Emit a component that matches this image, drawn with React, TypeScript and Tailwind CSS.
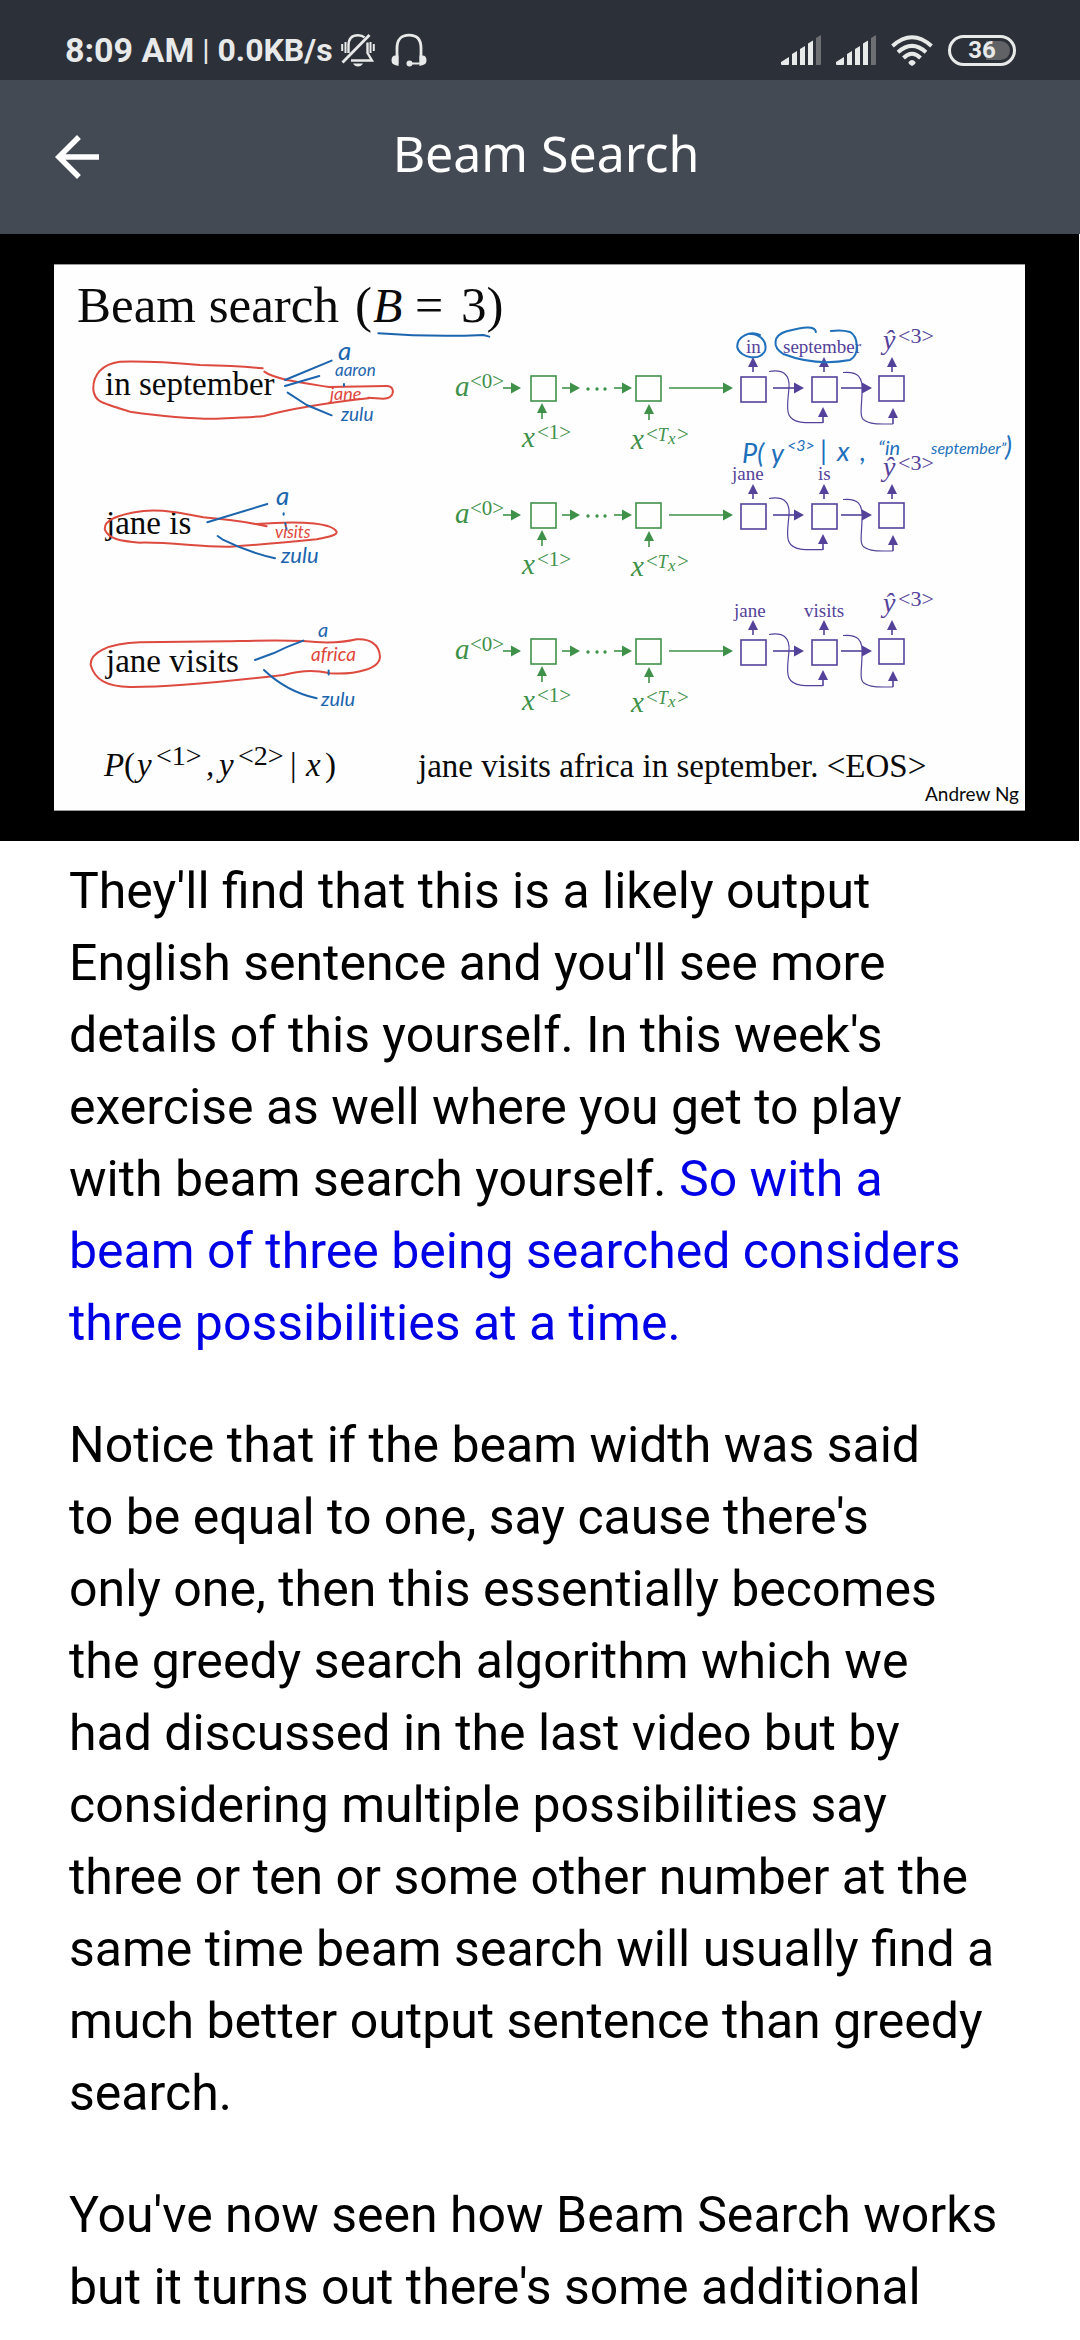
import { MdArrowBack } from "react-icons/md";

const GREEN = "#3f9149";
const PURPLE = "#54429a";
const RED = "#dd4a3f";
const BLUE = "#1c65ae";

function MutedBell() {
  return (
    <svg viewBox="0 0 34 34" className="h-[34px] w-[34px] shrink-0" fill="none" stroke="#e8e9e9" strokeWidth="2.4" aria-label="Ringer off" role="img">
      <path d="M7.500 20V12.500C7.500 5.500 11 2.200 17 2.200c3 0 5 .8 6.500 2.200M26.500 9.500v10.500l4.500 7.500H10" />
      <path d="M1.500 29.500 28.500 2" strokeWidth="2.8" />
      <path d="M1.200 11v7M4.500 9v11M29.500 9v11M32.800 11v7" strokeWidth="2" />
      <path d="M12 30.500h10c-1 2-3 3-5 3s-4-1-5-3z" fill="#e8e9e9" stroke="none" />
    </svg>
  );
}

function Headset() {
  return (
    <svg viewBox="0 0 36 34" className="h-[34px] w-9 shrink-0" fill="none" stroke="#e8e9e9" strokeWidth="2.800" aria-label="Headset" role="img">
      <path d="M6 31V15C6 6.500 10.500 2.200 18 2.200S30 6.500 30 15v16" />
      <path d="M18.500 30.500H29" strokeWidth="2" />
      <circle cx="18.500" cy="30.500" r="3" fill="#e8e9e9" stroke="none" />
      <path d="M7.500 22.500H4.500Q.5 22.500 .5 27.500Q.5 31 4 32l3.500 1zM28.500 22.500h3Q35.500 22.500 35.500 27.500Q35.500 31 32 32l-3.500 1z" fill="#e8e9e9" stroke="none" />
    </svg>
  );
}

function Signal() {
  return (
    <svg viewBox="0 0 40 30" className="h-[30px] w-10 shrink-0" fill="#e8e9e9" aria-label="Signal" role="img">
      <path d="M0 27 8 22v7q0 1-1 1H1q-1 0-1-1zM11 19l5-3v14h-5zM19 14l5-3v19h-5zM27 8.500l5-3V30h-5z" />
      <path d="M35 3l5-3v29q0 1-1 1h-4z" fill="#6d6f73" />
    </svg>
  );
}

function Wifi() {
  return (
    <svg viewBox="0 0 42 31" className="h-[31px] w-[42px] shrink-0" fill="none" stroke="#e8e9e9" strokeWidth="4" aria-label="Wi-Fi" role="img">
      <path d="M1.500 11Q21-6.500 40.500 11M7 17.200Q21 4.500 35 17.200M12.500 23Q21 14.500 29.500 23" />
      <path d="M17.500 27q3.500-4 7 0q.5 2-3.500 4q-4-2-3.500-4z" fill="#e8e9e9" stroke="none" />
    </svg>
  );
}

function Battery() {
  return (
    <div className="relative flex h-[31px] w-17 items-center justify-center rounded-full border-[3px] border-[#e8e9e9]">
      <div className="absolute right-[3px] h-[19px] w-6 rounded-r-full bg-[#606266]" />
      <span className="relative text-2xl font-bold text-[#e8e9e9]">36</span>
    </div>
  );
}

type Dir = "right" | "up";

function Arrow({ x, y, length, dir }: { x: number; y: number; length: number; dir: Dir }) {
  if (dir === "right") {
    return (
      <>
        <path d={`M${x} ${y}h${length - 8}`} strokeWidth="1.6" />
        <path d={`M${x + length} ${y}l-10 -5.500v11z`} fill="currentColor" stroke="none" />
      </>
    );
  }
  return (
    <>
      <path d={`M${x} ${y}v${8 - length}`} strokeWidth="1.6" />
      <path d={`M${x} ${y - length}l-5 10h10z`} fill="currentColor" stroke="none" />
    </>
  );
}

function Node({ x, y }: { x: number; y: number }) {
  return <rect x={x} y={y} width="25" height="25" strokeWidth="1.6" />;
}

function NetworkRow({ dy, first, second, firstX, secondX, labelY }: { dy: number; first: string; second: string; firstX: number; secondX: number; labelY: number }) {
  return (
    <g transform={`translate(0 ${dy})`} fill="none" stroke="currentColor">
      <g color={GREEN}>
        <g fill="currentColor" stroke="none" fontStyle="italic" fontSize="29">
          <text x="455" y="396">a</text>
          <text x="522" y="447">x</text>
          <text x="631" y="449">x</text>
        </g>
        <g fill="currentColor" stroke="none" fontSize="21">
          <text x="470" y="388">&lt;0&gt;</text>
          <text x="537" y="439">&lt;1&gt;</text>
          <text x="646" y="441">
            &lt;<tspan fontStyle="italic" fontSize="18">T</tspan>
            <tspan fontStyle="italic" fontSize="17" x="668" y="444">x</tspan>
            <tspan x="677" y="441">&gt;</tspan>
          </text>
        </g>
        <Arrow x={503} y={388} length={18} dir="right" />
        <Node x={531} y={376} />
        <Arrow x={562} y={388} length={18} dir="right" />
        <g fill="currentColor" stroke="none">
          <circle cx="588" cy="389" r="1.700" />
          <circle cx="597" cy="389" r="1.700" />
          <circle cx="605" cy="389" r="1.700" />
        </g>
        <Arrow x={614} y={388} length={18} dir="right" />
        <Node x={636} y={376} />
        <Arrow x={669} y={388} length={64} dir="right" />
        <Arrow x={542} y={419} length={16} dir="up" />
        <Arrow x={649} y={420} length={16} dir="up" />
      </g>
      <g color={PURPLE}>
        <g fill="currentColor" stroke="none" fontSize="19">
          <text x={firstX} y={labelY}>{first}</text>
          <text x={secondX} y={labelY}>{second}</text>
          <text x="883" y="349" fontStyle="italic" fontSize="28">ŷ</text>
          <text x="898" y="343" fontSize="22">&lt;3&gt;</text>
        </g>
        <Node x={741} y={377} />
        <Node x={812} y={377} />
        <Node x={879} y={376} />
        <Arrow x={773} y={388} length={31} dir="right" />
        <Arrow x={841} y={388} length={31} dir="right" />
        <Arrow x={753} y={372} length={15} dir="up" />
        <Arrow x={824} y={372} length={15} dir="up" />
        <Arrow x={892} y={372} length={15} dir="up" />
        <Arrow x={823} y={423} length={16} dir="up" />
        <Arrow x={893} y={424} length={16} dir="up" />
        <path strokeWidth="1.200" d="M769 371.500C784 369 790 375 789 388C788 400 786 409 789 415C793 423.500 805 423 823 422.500" />
        <path strokeWidth="1.200" d="M843 372.500C858 371 863 377 862 392C862 405 859 417 864 420C870 424.500 880 424 893 424" />
      </g>
    </g>
  );
}

function Slide() {
  return (
    <svg viewBox="0 234 1079 607" className="block w-full bg-black" fontFamily="'Liberation Serif', serif" role="img" aria-label="Beam search slide">
      <rect x="54" y="264" width="971" height="547" fill="#fefefe" />
      <g fill="#0a0a0a">
        <text y="322" fontSize="51">
          <tspan x="77">Beam search</tspan>
          <tspan x="355">(</tspan>
          <tspan x="373" fontStyle="italic" fontSize="48">B</tspan>
          <tspan x="415" fontSize="50">=</tspan>
          <tspan x="461">3)</tspan>
        </text>
        <g fontSize="33">
          <text x="105" y="395">in september</text>
          <text x="106" y="534">jane is</text>
          <text x="106" y="672">jane visits</text>
          <text x="418" y="777">jane visits africa in september. &lt;EOS&gt;</text>
          <text y="776" fontStyle="italic">
            <tspan x="104">P</tspan>
            <tspan x="124" fontStyle="normal">(</tspan>
            <tspan x="137">y</tspan>
            <tspan x="156" y="765" fontStyle="normal" fontSize="28">&lt;1&gt;</tspan>
            <tspan x="206" y="776">,</tspan>
            <tspan x="219">y</tspan>
            <tspan x="238" y="765" fontStyle="normal" fontSize="28">&lt;2&gt;</tspan>
            <tspan x="290" y="776" fontStyle="normal">|</tspan>
            <tspan x="306">x</tspan>
            <tspan x="325" fontStyle="normal">)</tspan>
          </text>
        </g>
        <text x="925" y="801" fontFamily="Lato, sans-serif" fontSize="19">Andrew Ng</text>
      </g>

      <NetworkRow dy={0} first="in" second="september" firstX={746} secondX={783} labelY={353} />
      <NetworkRow dy={127} first="jane" second="is" firstX={732} secondX={818} labelY={353} />
      <NetworkRow dy={263} first="jane" second="visits" firstX={734} secondX={804} labelY={354} />

      <g transform="translate(40 250) scale(0.3333)" fill="none" strokeLinecap="round" strokeLinejoin="round">
        <g stroke={RED} strokeWidth="6">
          <path d="M668 355C620 350 560 347 480 345C400 338 320 333 240 335C185 342 158 375 160 420C165 455 180 458 270 485C340 495 450 507 530 506C600 503 650 501 672 498C740 480 850 460 985 445" />
          <path d="M673 365C690 378 720 385 745 391C800 402 830 405 868 411L1040 408C1058 408 1060 420 1058 430C1055 442 1045 446 1030 446L985 443" />
          <path d="M680 829C640 820 560 808 490 802C430 790 370 778 310 783C220 795 190 815 195 840C205 866 240 874 300 878C400 876 480 892 570 890C640 886 760 875 830 868C870 860 892 855 890 846C880 822 800 810 650 822" />
          <path d="M790 1173C700 1170 650 1172 560 1174L300 1177C200 1180 150 1210 152 1245C165 1290 200 1310 270 1311C400 1312 600 1290 730 1275C800 1258 830 1262 870 1270C950 1275 1020 1255 1020 1220C1018 1180 985 1165 950 1168C900 1180 850 1180 790 1173" />
        </g>
        <g stroke={BLUE} strokeWidth="6">
          <path d="M1015 250Q1180 262 1330 255L1348 260" />
          <path d="M735 390 875 332M735 408 838 378M743 428 800 465 875 496" />
          <path d="M502 817 682 762M533 858 550 870Q620 905 705 925M731 790v4M736 820l4 20" />
          <path d="M645 1230 700 1210Q740 1190 790 1172M672 1260Q740 1325 830 1345M866 1262v12M912 402v5" />
        </g>
        <g stroke="#2170bb" strokeWidth="6">
          <path d="M2160 255C2130 240 2090 260 2092 292C2100 325 2165 335 2176 300C2182 270 2155 250 2130 252" />
          <path d="M2328 246C2325 225 2290 231 2240 244C2200 256 2195 290 2230 312C2290 335 2360 343 2430 330C2460 315 2455 260 2430 246C2410 240 2390 241 2373 243" />
        </g>
      </g>

      <g fontFamily="Lato, sans-serif" fontStyle="italic" fill={BLUE} fontSize="19">
        <text x="338" y="360" fontSize="26">a</text>
        <text x="335" y="376" fontSize="17">aaron</text>
        <text x="341" y="421">zulu</text>
        <text x="276" y="505" fontSize="26">a</text>
        <text x="281" y="563" fontSize="22">zulu</text>
        <text x="318" y="637" fontSize="20">a</text>
        <text x="321" y="706" fontSize="20">zulu</text>
        <g fill="#e0463b">
          <text x="330" y="400" fontSize="18">jane</text>
          <text x="275" y="538" fontSize="17">visits</text>
          <text x="311" y="661">africa</text>
        </g>
        <g fill="#2170bb" fontSize="27">
          <text x="742" y="463">P(</text>
          <text x="771" y="463">y</text>
          <text x="787" y="451" fontSize="16">&lt;3&gt;</text>
          <text x="820" y="460">|</text>
          <text x="837" y="461">x</text>
          <text x="860" y="461">,</text>
          <text x="878" y="455" fontSize="20">“in</text>
          <text x="931" y="454" fontSize="16">september”</text>
          <text x="1005" y="456">)</text>
        </g>
      </g>
      <path d="M54 264.500H1025M54 810.500H1025" stroke="#9a9a9a" />
    </svg>
  );
}

export default function App() {
  return (
    <div className="min-h-screen bg-white font-[Roboto,sans-serif] text-black">
      <div className="flex h-20 items-center bg-[#2c3038] pt-5 pr-16 pl-[65px] text-[#e8e9e9]">
        <div className="flex items-center font-bold">
          <span className="text-[34px]">8:09 AM</span>
          <span className="px-2 text-3xl font-normal">|</span>
          <span className="text-[32px]">0.0KB/s</span>
        </div>
        <div className="ml-2 flex items-center gap-4">
          <MutedBell />
          <Headset />
        </div>
        <div className="ml-auto flex items-center gap-[15px]">
          <Signal />
          <Signal />
          <Wifi />
          <Battery />
        </div>
      </div>

      <header className="grid h-[154px] grid-cols-[1fr_auto_1fr] items-center bg-[#444a53] pr-8 pl-11 text-white">
        <button type="button" aria-label="Back" className="w-fit">
          <MdArrowBack size={66} />
        </button>
        <h1 className="pb-2 font-['Noto_Sans',sans-serif] text-[50px]">Beam Search</h1>
      </header>

      <div className="bg-white pr-px">
        <Slide />
      </div>

      <main className="flex flex-col gap-[50px] pt-[14px] pr-[79px] pl-[69px] text-[50px] leading-[72px]">
        <p>
          They'll find that this is a likely output English sentence and you'll see more details of this yourself. In this week's exercise as well where you get to play with beam search yourself.{" "}
          <span className="text-[#0000e6]">So with a beam of three being searched considers three possibilities at a time.</span>
        </p>
        <p>
          Notice that if the beam width was said
          <br />
          to be equal to one, say cause there's
          <br />
          only one, then this essentially becomes the greedy search algorithm which we had discussed in the last video but by considering multiple possibilities say three or ten or some other number at the same time beam search will usually find a much better output sentence than greedy search.
        </p>
        <p>You've now seen how Beam Search works but it turns out there's some additional</p>
      </main>
    </div>
  );
}
